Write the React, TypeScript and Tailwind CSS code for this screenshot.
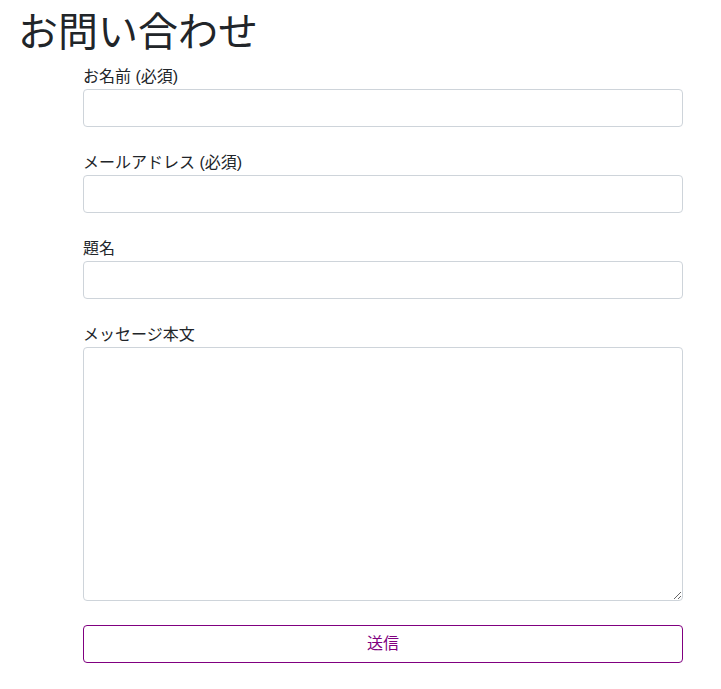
export default function App() {
  return (
    <div
      className="min-h-[689px] bg-white text-[#212529]"
      style={{ fontFamily: '"Liberation Sans", "Noto Sans CJK JP", sans-serif' }}
    >
      <h1 className="pl-[18px] pt-2 mb-[9px] text-[40px] leading-[48px] font-normal">お問い合わせ</h1>
      <form className="ml-[83px] w-[600px] flex flex-col" onSubmit={(e) => e.preventDefault()}>
        <div className="mb-6 flex flex-col">
          <label className="text-base leading-6">お名前 (必須)</label>
          <input className="h-[38px] border border-[#ced4da] rounded px-3" />
        </div>
        <div className="mb-6 flex flex-col">
          <label className="text-base leading-6">メールアドレス (必須)</label>
          <input className="h-[38px] border border-[#ced4da] rounded px-3" />
        </div>
        <div className="mb-6 flex flex-col">
          <label className="text-base leading-6">題名</label>
          <input className="h-[38px] border border-[#ced4da] rounded px-3" />
        </div>
        <div className="mb-6 flex flex-col">
          <label className="text-base leading-6">メッセージ本文</label>
          <textarea className="h-[254px] border border-[#ced4da] rounded px-3 py-1.5" />
        </div>
        <button
          type="submit"
          className="h-[38px] border border-[#800080] rounded text-[#800080] text-base bg-white"
        >
          送信
        </button>
      </form>
    </div>
  );
}
